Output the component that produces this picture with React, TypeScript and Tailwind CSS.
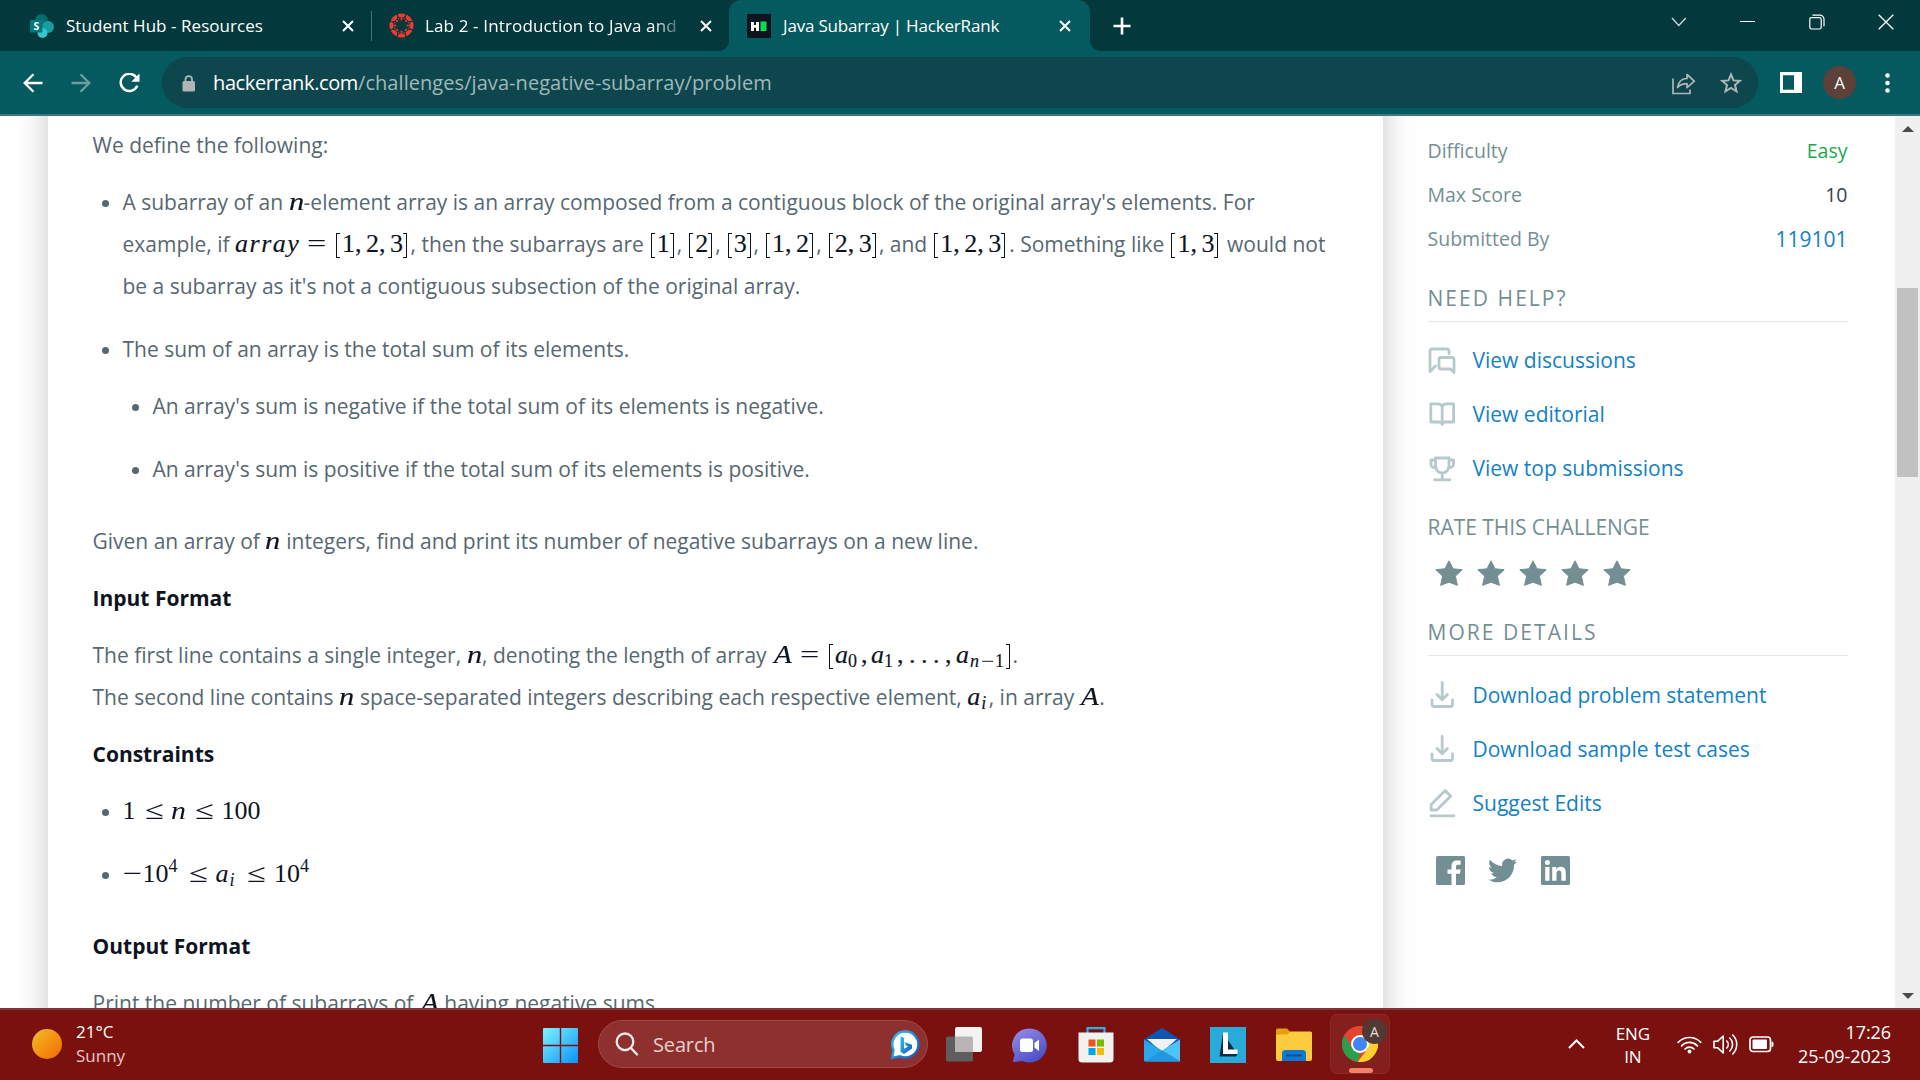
import React from "react";

type Kids = { children?: React.ReactNode };

/* ---------- math helpers ---------- */

function M({ w, bold = true, children }: { w: string; bold?: boolean } & Kids) {
  return (
    <span
      className={
        "inline-block whitespace-nowrap font-['Liberation_Serif',serif] text-[26px] leading-none text-[#0e141e] " +
        (bold ? "[-webkit-text-stroke:0.15px_#0e141e] " : "") +
        w
      }
    >
      {children}
    </span>
  );
}

function C({ w, c = "", children }: { w: string; c?: string } & Kids) {
  return <span className={"inline-block leading-none " + w + " " + c}>{children}</span>;
}

const It = ({ w, children }: { w: string } & Kids) => (
  <C w={w} c="italic">
    {children}
  </C>
);

/* Wide capital A set in the math italic */
const BigA = ({ w }: { w: string }) => (
  <C w={w}>
    <span className="inline-block origin-left scale-x-[1.12] italic leading-none">A</span>
  </C>
);

/* Relation sign stretched to math width */
const Rel = ({ w, children }: { w: string } & Kids) => (
  <C w={w}>
    <span className="inline-block origin-left scale-x-[1.32] leading-none [-webkit-text-stroke:0]">{children}</span>
  </C>
);

const Sub = ({ w, it = false, children }: { w: string; it?: boolean } & Kids) => (
  <span className={"inline-block translate-y-[4px] text-[18px] leading-none " + w + (it ? " italic" : "")}>{children}</span>
);

const Sup = ({ w, children }: { w: string } & Kids) => (
  <span className={"inline-block -translate-y-[10px] text-[18px] leading-none " + w}>{children}</span>
);

const Open = () => (
  <span className="inline-block w-[6px] text-[29px] leading-none">
    <span className="inline-block h-[25px] w-[4px] translate-y-[6px] border-y-[1.5px] border-l-[1.5px] border-[#0e141e]" />
  </span>
);
const Close = () => (
  <span className="inline-block w-[5px] text-[29px] leading-none">
    <span className="inline-block h-[25px] w-[4px] translate-y-[6px] border-y-[1.5px] border-r-[1.5px] border-[#0e141e]" />
  </span>
);

function List({ w, items }: { w: string; items: string[] }) {
  return (
    <M w={w}>
      <span className="inline-block w-[1.6px]" />
      <Open />
      {items.map((x, i) => (
        <React.Fragment key={x}>
          {i > 0 && <C w="w-[11px]">,</C>}
          <C w="w-[13px]">{x}</C>
        </React.Fragment>
      ))}
      <Close />
    </M>
  );
}

const N = ({ w }: { w: string }) => (
  <M w={w}>
    <span className="inline-block origin-left scale-x-[1.17] italic leading-none">n</span>
  </M>
);

function Li({ className = "", children }: { className?: string } & Kids) {
  return (
    <li className={"flex " + className}>
      <span className="mt-[19px] mr-[13.500px] ml-[9.500px] h-[7px] w-[7px] shrink-0 rounded-full bg-[#576871]" />
      <div className="min-w-0 flex-1">{children}</div>
    </li>
  );
}

const Line = ({ children }: Kids) => <div className="h-[42px] leading-[42px] whitespace-pre">{children}</div>;
const H = ({ children }: Kids) => <div className="h-[42px] leading-[42px] font-bold text-[#0e141e]">{children}</div>;

/* ---------- browser chrome ---------- */

const TabClose = ({ className = "" }: { className?: string }) => (
  <svg width="12" height="12" viewBox="0 0 12 12" className={"shrink-0 " + className}>
    <path d="M1 1l10 10M11 1L1 11" stroke="#fff" strokeWidth="2" />
  </svg>
);

function SharePointIcon() {
  return (
    <svg width="24" height="24" viewBox="0 0 24 24" className="shrink-0">
      <circle cx="11.5" cy="6.5" r="6.5" fill="#036c70" />
      <circle cx="18" cy="13" r="6" fill="#1a9ba1" />
      <circle cx="12.5" cy="19" r="5" fill="#37c6d0" />
      <rect x="0" y="6" width="12.5" height="12.5" rx="1" fill="#03787c" />
      <text x="6.3" y="15.8" textAnchor="middle" fontSize="10.5" fontWeight="700" fontFamily="Open Sans, sans-serif" fill="#fff">S</text>
    </svg>
  );
}

function CanvasIcon() {
  const a = [0, 45, 90, 135, 180, 225, 270, 315];
  return (
    <svg width="25" height="25" viewBox="-12.5 -12.5 25 25" className="shrink-0">
      {a.map((d) => (
        <g key={d} transform={`rotate(${d})`} fill="#ef3a2d">
          <path d="M-3.800 -11.400A12 12 0 0 1 3.800 -11.400A3.800 3.600 0 0 1 -3.800 -11.400Z" />
          <circle cx="0" cy="-6.300" r="1.100" />
          <circle cx="2.800" cy="-6.800" r="0.700" />
        </g>
      ))}
    </svg>
  );
}

function HackerRankIcon() {
  return (
    <svg width="24" height="24" viewBox="0 0 24 24" className="shrink-0">
      <rect width="24" height="24" fill="#0e141e" />
      <path d="M4 8h3v3h2V8h3v9H9v-3.200H7V17H4z" fill="#fff" />
      <rect x="13.500" y="7.500" width="6" height="9.500" fill="#05e053" />
    </svg>
  );
}

function TabStrip() {
  return (
    <div className="flex h-[51px] bg-[#03383d] text-[17px] leading-[51px] text-white">
      <div className="flex w-[372px] items-center pl-[30px]">
        <SharePointIcon />
        <span className="ml-[12px] w-[276px] tracking-[0.050px]">Student Hub - Resources</span>
        <TabClose />
        <span className="ml-[17px] h-[30px] w-px bg-[#4b7276]" />
      </div>
      <div className="flex w-[357px] items-center pl-[17px]">
        <CanvasIcon />
        <span className="ml-[11px] w-[254px] overflow-hidden whitespace-nowrap tracking-[0.140px] [mask-image:linear-gradient(90deg,#000_228px,transparent_262px)]">
          Lab 2 - Introduction to Java and
        </span>
        <TabClose className="ml-[21px]" />
      </div>
      <div className="relative flex w-[361px] items-center rounded-t-[12px] bg-[#055a5f] pl-[18px]">
        <span className="absolute bottom-0 -left-[10px] h-[10px] w-[10px] bg-[radial-gradient(circle_at_0_0,#03383d_9.5px,#055a5f_10px)]" />
        <span className="absolute -right-[10px] bottom-0 h-[10px] w-[10px] bg-[radial-gradient(circle_at_100%_0,#03383d_9.5px,#055a5f_10px)]" />
        <HackerRankIcon />
        <span className="ml-[12px] w-[276px] tracking-[-0.180px]">Java Subarray | HackerRank</span>
        <TabClose />
      </div>
      <div className="flex flex-1 items-center">
        <svg width="18" height="18" viewBox="0 0 18 18" className="ml-[23px]">
          <path d="M9 0.5v17M0.5 9h17" stroke="#fff" strokeWidth="2.6" />
        </svg>
        <div className="mb-[8px] ml-auto flex items-center">
          <svg width="16" height="10" viewBox="0 0 16 10" className="mr-[53px]">
            <path d="M1 1l6.8 7.5L14.8 1" fill="none" stroke="#cfdadb" strokeWidth="1.3" />
          </svg>
          <span className="mr-[54px] h-px w-[15px] bg-white" />
          <svg width="16" height="16" viewBox="0 0 16 16" className="mr-[53px]" fill="none" stroke="#fff" strokeWidth="1.2">
            <rect x="0.8" y="3.6" width="11.4" height="11.4" rx="1.8" />
            <path d="M3.4 1.2h7.6a4 4 0 0 1 4 4v7" />
          </svg>
          <svg width="16" height="16" viewBox="0 0 16 16" className="mr-[26px]">
            <path d="M0.7 0.7l14.6 14.6M15.3 0.7L0.7 15.3" stroke="#fff" strokeWidth="1.3" />
          </svg>
        </div>
      </div>
    </div>
  );
}

function Toolbar() {
  return (
    <div className="flex h-[65px] items-center border-b-2 border-[#3c7b80] bg-[#055a5f] pl-[23px]">
      <svg width="20" height="20" viewBox="0 0 20 20" fill="none" stroke="#fff" strokeWidth="2.3">
        <path d="M19.5 10H2M10.5 1.2L1.700 10l8.800 8.800" />
      </svg>
      <svg width="20" height="20" viewBox="0 0 20 20" fill="none" stroke="#6d9fa2" strokeWidth="2.3" className="ml-[28px]">
        <path d="M0.500 10H18M9.500 1.200l8.800 8.800-8.800 8.800" />
      </svg>
      <svg width="21" height="20" viewBox="0 0 21 20" className="ml-[28px]">
        <path d="M17.300 4.400A8.600 8.600 0 1 0 18.300 12.600" fill="none" stroke="#fff" strokeWidth="2.500" />
        <path d="M20.500 0.500v8.200h-8.200z" fill="#fff" />
      </svg>
      <div className="ml-[22px] flex h-[51px] w-[1596px] items-center rounded-full bg-[#0e464e] pl-[20px]">
        <svg width="14" height="17" viewBox="0 0 14 17" className="mt-[2px]">
          <rect x="0.500" y="6" width="12.500" height="10.500" rx="1.500" fill="#b0b5b9" />
          <path d="M3.500 6.500V4.300a3.250 3.250 0 0 1 6.500 0V6.500" fill="none" stroke="#b0b5b9" strokeWidth="1.800" />
        </svg>
        <div className="ml-[17px] text-[20px] leading-[51px] tracking-[0.060px] text-[#9fb9bb]">
          <span className="tracking-[-0.380px] text-white">hackerrank.com</span>/challenges/java-negative-subarray/problem
        </div>
        <svg width="24" height="22" viewBox="0 0 24 22" className="mb-[-2px] ml-auto" fill="none" stroke="#b0b5b9" strokeWidth="1.700">
          <path d="M1 5.500V20.500H18V16.500" />
          <path d="M5.500 14.500C6.500 8.500 10 5.500 15 5.500V1.500L22.300 8.200 15 14.700V10.600C10.500 10.600 7.500 12 5.500 14.500Z" strokeLinejoin="round" />
        </svg>
        <svg width="22" height="21" viewBox="0 0 22 21" className="mr-[16px] ml-[24px]">
          <path d="M11 2.500l2.500 5.900 6.300.5-4.800 4.200 1.500 6.200L11 16l-5.500 3.300L7 13.100 2.200 8.900l6.300-.5z" fill="none" stroke="#b0b5b9" strokeWidth="2" />
        </svg>
      </div>
      <svg width="22" height="21" viewBox="0 0 22 21" className="ml-[22px]">
        <path fillRule="evenodd" d="M0 0h22v21H0zM3 3.200v14.600h11V3.200z" fill="#fff" />
      </svg>
      <span className="ml-[21px] flex h-[33px] w-[33px] items-center justify-center rounded-full bg-[#5d4037] text-[17px] leading-none text-white">A</span>
      <svg width="5" height="20" viewBox="0 0 5 20" className="ml-[28.500px]" fill="#fff">
        <circle cx="2.500" cy="2.500" r="2.300" />
        <circle cx="2.500" cy="10" r="2.300" />
        <circle cx="2.500" cy="17.500" r="2.300" />
      </svg>
    </div>
  );
}

/* ---------- problem statement ---------- */

function Article() {
  return (
    <article className="-mt-[40px] h-[972px] w-[1335px] shrink-0 bg-white pt-[48px] pl-[44.500px] text-[21px] text-[#576871] shadow-[0_0_30px_rgba(0,0,0,0.22)]">
      <Line>We define the following:</Line>
      <ul className="mt-[15px]">
        <Li>
          <Line>A subarray of an <N w="w-[15px]" />-element array is an array composed from a contiguous block of the original array's elements. For</Line>
          <Line>
            example, if <M w="w-[175.500px]">
              <C w="w-[72px]" c="italic tracking-[1.500px]">array</C>
              <Rel w="w-[29px]">=</Rel>
              <Open /><C w="w-[13px]">1</C><C w="w-[11px]">,</C><C w="w-[13px]">2</C><C w="w-[11px]">,</C><C w="w-[13px]">3</C><Close />
            </M>, then the subarrays are <List w="w-[27.500px]" items={["1"]} />, <List w="w-[27.500px]" items={["2"]} />, <List w="w-[27.500px]" items={["3"]} />, <List w="w-[51.800px]" items={["1", "2"]} />, <List w="w-[51.800px]" items={["2", "3"]} />, and <List w="w-[76.500px]" items={["1", "2", "3"]} />. Something like <List w="w-[51.800px]" items={["1", "3"]} /> would not
          </Line>
          <Line>be a subarray as it's not a contiguous subsection of the original array.</Line>
        </Li>
        <Li className="mt-[21px]">
          <Line>The sum of an array is the total sum of its elements.</Line>
          <ul className="mt-[15px]">
            <Li><Line>An array's sum is negative if the total sum of its elements is negative.</Line></Li>
            <Li className="mt-[21px]"><Line>An array's sum is positive if the total sum of its elements is positive.</Line></Li>
          </ul>
        </Li>
      </ul>
      <div className="mt-[30px]">
        <Line>Given an array of <N w="w-[15.500px]" /> integers, find and print its number of negative subarrays on a new line.</Line>
      </div>
      <div className="mt-[15px]"><H>Input Format</H></div>
      <div className="mt-[15px]">
        <Line>
          The first line contains a single integer, <N w="w-[15.500px]" />, denoting the length of array <M w="w-[240.500px]">
            <span className="inline-block w-[1.500px]" />
            <BigA w="w-[26.500px]" />
            <Rel w="w-[29px]">=</Rel>
            <Open /><It w="w-[13px]">a</It><Sub w="w-[13px]">0</Sub><C w="w-[10px]">,</C>
            <It w="w-[13px]">a</It><Sub w="w-[13px]">1</Sub><C w="w-[12px]">,</C>
            <C w="w-[36px]" c="tracking-[5.500px]">...</C><C w="w-[11px]">,</C>
            <It w="w-[14px]">a</It><Sub it w="w-[11px]">n</Sub>
            <Sub w="w-[14px]"><span className="inline-block origin-left scale-x-[1.300]">−</span></Sub><Sub w="w-[11px]">1</Sub><Close />
          </M>.
        </Line>
        <Line>
          The second line contains <N w="w-[15.500px]" /> space-separated integers describing each respective element, <M w="w-[21.500px]">
            <It w="w-[14px]">a</It><Sub it w="w-[6px]">i</Sub>
          </M>, in array <M w="w-[19.500px]"><span className="inline-block w-[1px]" /><BigA w="w-[18px]" /></M>.
        </Line>
      </div>
      <div className="mt-[15px]"><H>Constraints</H></div>
      <ul className="mt-[15px]">
        <Li>
          <Line>
            <M w="w-[200px]" bold={false}>
              <C w="w-[22px]">1</C><Rel w="w-[26px]">≤</Rel>
              <It w="w-[24px]"><span className="inline-block origin-left scale-x-[1.150]">n</span></It><Rel w="w-[27px]">≤</Rel><C w="w-[39px]">100</C>
            </M>
          </Line>
        </Li>
        <Li className="mt-[21px]">
          <Line>
            <M w="w-[220px]" bold={false}>
              <Rel w="w-[20px]">−</Rel><C w="w-[26px]">10</C><Sup w="w-[20px]">4</Sup>
              <Rel w="w-[27px]">≤</Rel>
              <It w="w-[14px]">a</It><Sub it w="w-[17.500px]">i</Sub>
              <Rel w="w-[27px]">≤</Rel><C w="w-[26px]">10</C><Sup w="w-[10px]">4</Sup>
            </M>
          </Line>
        </Li>
      </ul>
      <div className="mt-[30px]"><H>Output Format</H></div>
      <div className="mt-[15px]">
        <Line>Print the number of subarrays of <M w="w-[20px]"><span className="inline-block w-[2.500px]" /><BigA w="w-[17px]" /></M> having negative sums.</Line>
      </div>
    </article>
  );
}

/* ---------- sidebar ---------- */

const iconProps = { width: 30, height: 30, viewBox: "0 0 30 30", fill: "none", stroke: "#b7c9cc", strokeWidth: 2.8, strokeLinejoin: "round" as const, strokeLinecap: "round" as const };

const ChatIcon = () => (
  <svg {...iconProps}>
    <path d="M21 7.500V5a2 2 0 0 0-2-2H4a2 2 0 0 0-2 2v20.500L7.500 20" />
    <path d="M13 11.500H24a2 2 0 0 1 2 2v13L22.500 23H13a2 2 0 0 1-2-2v-7.500a2 2 0 0 1 2-2z" />
  </svg>
);
const BookIcon = () => (
  <svg {...iconProps}>
    <path d="M14.200 6.500C13.200 4.500 12 3.800 10 3.800H2.800V22h8c2 0 2.900.5 3.400 2.500.5-2 1.400-2.500 3.400-2.500h8V3.800h-7.200c-2 0-3.200.7-4.200 2.700zM14.200 6.500V24" />
  </svg>
);
const TrophyIcon = () => (
  <svg {...iconProps}>
    <path d="M7.500 4H21v8a6.750 7 0 0 1-13.500 0zM7.500 6H3v4.500a3 3 0 0 0 3 3h2M21 6h4.500v4.500a3 3 0 0 1-3 3h-2M14.200 19v6.500M6.500 25.800h15.500" />
  </svg>
);
const DownloadIcon = () => (
  <svg {...iconProps}>
    <path d="M14.200 1.500v17M9 13.500l5.200 5.200 5.200-5.200M4 19v4.500a2 2 0 0 0 2 2h16.500a2 2 0 0 0 2-2V19" />
  </svg>
);
const EditIcon = () => (
  <svg {...iconProps}>
    <path d="M3.200 21v-5.500L17.200 1.500l5.500 5.700L8.800 21zM3 26.800h23" />
  </svg>
);

const SideLink = ({ icon, children }: { icon: React.ReactNode } & Kids) => (
  <div className="flex h-[54px] items-center text-[21px] leading-[54px] text-[#1381c5]">
    <span className="w-[45px] pt-[2px]">{icon}</span>
    {children}
  </div>
);

const Row = ({ label, value, cls }: { label: string; value: string; cls: string }) => (
  <div className="flex h-[44px] justify-between text-[19.500px] leading-[44px]">
    <span className="text-[#738f93]">{label}</span>
    <span className={cls}>{value}</span>
  </div>
);

function Sidebar() {
  return (
    <aside className="ml-[44.500px] w-[420px] pt-[12.500px] text-[#738f93]">
      <Row label="Difficulty" value="Easy" cls="text-[#1ba94c]" />
      <Row label="Max Score" value="10" cls="text-[#39424e]" />
      <Row label="Submitted By" value="119101" cls="text-[21px] text-[#1381c5]" />
      <div className="mt-[23.500px] border-b border-[#e2e9eb] pb-[9px] text-[21px] leading-[28px] tracking-[2.050px]">NEED HELP?</div>
      <div className="mt-[10.500px]">
        <SideLink icon={<ChatIcon />}>View discussions</SideLink>
        <SideLink icon={<BookIcon />}>View editorial</SideLink>
        <SideLink icon={<TrophyIcon />}>View top submissions</SideLink>
      </div>
      <div className="mt-[18.500px] text-[21px] leading-[28px] tracking-[-0.050px]">RATE THIS CHALLENGE</div>
      <div className="mt-[19px] flex gap-[14px] pl-[7px]">
        {[1, 2, 3, 4, 5].map((i) => (
          <svg key={i} width="28" height="26" viewBox="0 0 28 26">
            <path d="M14 0.800l4 8 9.200.9-6.800 6.400 2 9.200L14 22.200l-8.400 3.100 2-9.200L0.800 9.700l9.200-.9z" fill="#738f93" stroke="#738f93" strokeLinejoin="round" />
          </svg>
        ))}
      </div>
      <div className="mt-[32px] border-b border-[#e2e9eb] pb-[9px] text-[21px] leading-[28px] tracking-[2.050px]">MORE DETAILS</div>
      <div className="mt-[11.500px]">
        <SideLink icon={<DownloadIcon />}>Download problem statement</SideLink>
        <SideLink icon={<DownloadIcon />}>Download sample test cases</SideLink>
        <SideLink icon={<EditIcon />}>Suggest Edits</SideLink>
      </div>
      <div className="mt-[26px] flex items-center pl-[8px]">
        <svg width="29" height="29" viewBox="0 0 29 29">
          <path fillRule="evenodd" d="M1.500 0h26a1.500 1.500 0 0 1 1.500 1.500v26a1.500 1.500 0 0 1-1.500 1.500H20V17.800h4l.6-4.300H20v-2.700c0-1.300.4-2.100 2.100-2.100h2.500V4.600c-.5 0-1.900-.2-3.500-.2-3.500 0-5.600 2-5.600 5.800v3.300h-4v4.300h4V29H1.500A1.500 1.500 0 0 1 0 27.500v-26A1.500 1.500 0 0 1 1.500 0z" fill="#738f93" />
        </svg>
        <svg width="29" height="29" viewBox="0 0 24 24" className="ml-[23px]">
          <path d="M23.950 4.570a10 10 0 0 1-2.820.77 4.960 4.960 0 0 0 2.160-2.720c-.95.550-2.010.960-3.130 1.180a4.920 4.920 0 0 0-8.380 4.480C7.690 8.090 4.070 6.130 1.640 3.160a4.820 4.820 0 0 0-.67 2.480c0 1.710.87 3.210 2.190 4.100a4.900 4.900 0 0 1-2.230-.620v.060a4.920 4.920 0 0 0 3.950 4.830 5 5 0 0 1-2.210.080 4.940 4.940 0 0 0 4.600 3.420A9.870 9.870 0 0 1 0 19.540a13.990 13.990 0 0 0 7.550 2.210c9.050 0 14-7.500 14-13.980 0-.210 0-.420-.020-.630a9.940 9.940 0 0 0 2.460-2.550z" fill="#738f93" />
        </svg>
        <svg width="29" height="29" viewBox="0 0 29 29" className="ml-[24px]">
          <path fillRule="evenodd" d="M1.500 0h26a1.500 1.500 0 0 1 1.500 1.500v26a1.500 1.500 0 0 1-1.500 1.500h-26A1.500 1.500 0 0 1 0 27.500v-26A1.500 1.500 0 0 1 1.500 0zM4.200 11v13.800h4.300V11zM6.400 4a2.500 2.500 0 1 0 0 5 2.500 2.500 0 0 0 0-5zM11.200 11v13.800h4.300V18c0-1.800.5-3.500 2.600-3.500s2.300 1.900 2.300 3.600v6.700h4.400v-7.600c0-3.700-.9-6.500-5.200-6.500-2.100 0-3.500 1.100-4.100 2.200h-.1V11z" fill="#738f93" />
        </svg>
      </div>
    </aside>
  );
}

function Scrollbar() {
  return (
    <div className="ml-auto flex w-[25px] flex-col items-center bg-[#f0f0f0]">
      <svg width="12" height="6" viewBox="0 0 12 6" className="mt-[10px]"><path d="M6 0l6 6H0z" fill="#4c4c4c" /></svg>
      <div className="mt-[156px] h-[189px] w-[21px] bg-[#c1c1c1]" />
      <svg width="12" height="6" viewBox="0 0 12 6" className="mt-auto mb-[9px]"><path d="M0 0h12L6 6z" fill="#4c4c4c" /></svg>
    </div>
  );
}

/* ---------- taskbar ---------- */

function Taskbar() {
  return (
    <div className="flex h-[72px] items-center border-t-2 border-[#7d3636] bg-[#7b110e] text-white">
      <div className="mb-[3px] ml-[31.500px] h-[30px] w-[30px] rounded-full bg-[linear-gradient(135deg,#f0be32,#f5930f_50%,#f06a0c)]" />
      <div className="mb-[3px] ml-[14.500px] w-[467px] text-[17px] leading-[24px]">
        <div>21°C</div>
        <div className="text-[#e3c7c6]">Sunny</div>
      </div>
      <svg width="35" height="35" viewBox="0 0 35 35">
        <defs>
          <linearGradient id="win" x1="0" y1="0" x2="1" y2="1" gradientUnits="objectBoundingBox">
            <stop offset="0" stopColor="#7df3ff" />
            <stop offset="1" stopColor="#0a93fb" />
          </linearGradient>
        </defs>
        <path d="M1 0H16.800V16.800H0V1a1 1 0 0 1 1-1zM18.200 0H34a1 1 0 0 1 1 1V16.800H18.200zM0 18.200H16.800V35H1a1 1 0 0 1-1-1zM18.200 18.200H35V34a1 1 0 0 1-1 1H18.200z" fill="url(#win)" />
      </svg>
      <div className="mb-[2px] ml-[20px] flex h-[48px] w-[330px] items-center rounded-full border border-[#9c4b49] bg-[#8d302e] pl-[16px]">
        <svg width="24" height="24" viewBox="0 0 24 24" fill="none" stroke="#f3e9e9" strokeWidth="2.300">
          <circle cx="10" cy="9.800" r="8.300" />
          <path d="M16 16l6 6.500" strokeLinecap="round" />
        </svg>
        <span className="mt-[2px] ml-[14px] text-[20px] tracking-[-0.150px] text-[#e6d0cf]">Search</span>
        <svg width="30" height="30" viewBox="0 0 30 30" className="mt-[1px] mr-[7px] ml-auto">
          <defs>
            <linearGradient id="bing" x1="0" y1="0" x2="1" y2="1">
              <stop offset="0" stopColor="#29c3f7" />
              <stop offset="1" stopColor="#1755c0" />
            </linearGradient>
          </defs>
          <path d="M15.500 1.500a13 13 0 1 1-5.500 24.800L2 28l1.500-8A13 13 0 0 1 15.500 1.500z" fill="#fff" stroke="url(#bing)" strokeWidth="2.400" />
          <path d="M10.500 6.500l3.500 1.300v11l4-2.300-2-1-1.500-3.500 7.500 2.800v3.800L14 24l-3.500-2.200z" fill="url(#bing)" />
        </svg>
      </div>
      <svg width="36" height="35" viewBox="0 0 36 35" className="mb-[1px] ml-[18px]">
        <rect x="0" y="9.500" width="27" height="25" rx="2" fill="#5e5e5e" />
        <rect x="9" y="0" width="27" height="25" rx="2" fill="#f3f3f3" />
        <path d="M9 9.500h16a2 2 0 0 1 2 2V25H11a2 2 0 0 1-2-2z" fill="#b9b5b5" />
      </svg>
      <svg width="35" height="35" viewBox="0 0 35 35" className="ml-[30px]">
        <defs>
          <linearGradient id="chat" x1="0" y1="0" x2="0.600" y2="1">
            <stop offset="0" stopColor="#9a8fe6" />
            <stop offset="1" stopColor="#4d50c8" />
          </linearGradient>
        </defs>
        <path d="M17.500 0.500a17 17 0 1 1-7 32.400L0.800 34.300l1.800-8A17 17 0 0 1 17.500 0.500z" fill="url(#chat)" />
        <rect x="8" y="10.500" width="13" height="13.500" rx="2.500" fill="#fff" />
        <path d="M22.500 15l4.500-3.500v11.500l-4.500-3.500z" fill="#fff" />
      </svg>
      <svg width="36" height="36" viewBox="0 0 36 36" className="ml-[31px]">
        <path d="M9.500 6V1.200H26.500V6" fill="none" stroke="#2cb0ec" strokeWidth="2.200" />
        <path d="M0.500 5.500H35.500V32a3.500 3.500 0 0 1-3.500 3.500H4A3.500 3.500 0 0 1 0.500 32z" fill="#f1f1f1" />
        <rect x="10.500" y="12.500" width="7" height="7" fill="#f25022" />
        <rect x="19" y="12.500" width="7" height="7" fill="#7fba00" />
        <rect x="10.500" y="21" width="7" height="7" fill="#00a4ef" />
        <rect x="19" y="21" width="7" height="7" fill="#ffb900" />
      </svg>
      <svg width="36" height="34" viewBox="0 0 36 34" className="mb-[1px] ml-[30px]">
        <path d="M0 11.500L16.500 0.800a2.500 2.500 0 0 1 3 0L36 11.500V20H0z" fill="#0a56b0" />
        <path d="M3 11h30L18 24z" fill="#f2f2f2" />
        <path d="M0 11.500L18 22.500 36 33.500H1.500A1.500 1.500 0 0 1 0 32z" fill="#2ba6ea" />
        <path d="M18 22.500L36 11.500V33.500z" fill="#4cc4f8" />
        <path d="M18 22.500L36 33.500H1z" fill="#2197e3" />
      </svg>
      <svg width="36" height="36" viewBox="0 0 36 36" className="mb-[1px] ml-[30px]">
        <rect width="36" height="36" fill="#29abd9" />
        <path d="M13 6L9.500 29.500H26L27.500 27z" fill="#0b2a47" />
        <path d="M13 5.500h5V22.500h9.500V27H13z" fill="#fff" />
      </svg>
      <svg width="36" height="34" viewBox="0 0 36 34" className="ml-[30px]">
        <path d="M0 2a1.500 1.500 0 0 1 1.500-1.500H11L14.500 4H18V12H0z" fill="#e2a00f" />
        <path d="M0 6.500H11L14.500 3.500H34.500A1.500 1.500 0 0 1 36 5V31a2 2 0 0 1-2 2H2a2 2 0 0 1-2-2z" fill="#fccb3e" />
        <path d="M6 33V25.500a3.500 3.500 0 0 1 3.500-3.500h17a3.500 3.500 0 0 1 3.500 3.500V33z" fill="#0f78d0" />
        <path d="M11 27.500h14" stroke="#0a4c97" strokeWidth="1.800" strokeLinecap="round" />
      </svg>
      <div className="relative mb-[2px] ml-[18px] flex h-[60px] w-[60px] justify-center rounded-[7px] border border-[#8a2b28] bg-[#83201d] pt-[11px]">
        <svg width="36" height="36" viewBox="0 0 36 36">
          <circle cx="18" cy="18" r="18" fill="#e8432f" />
          <path d="M2.400 9L10.200 22.500 18 27l-2.300 8.900A18 18 0 0 1 2.400 9z" fill="#2a9e4a" />
          <path d="M18 9H33.600A18 18 0 0 1 15.700 35.900L25.800 22.500z" fill="#fdd129" />
          <circle cx="18" cy="18" r="9" fill="#fff" />
          <circle cx="18" cy="18" r="7" fill="#4285f4" />
        </svg>
        <span className="absolute top-[4px] left-[31px] flex h-[25px] w-[25px] items-center justify-center rounded-full bg-[#513a34] text-[14px] leading-none text-[#e3dedd]">A</span>
        <span className="absolute bottom-0 left-[18px] h-[5px] w-[24px] rounded-full bg-[#f38068]" />
      </div>
      <div className="mb-[2px] ml-auto flex items-center pr-[29px]">
        <svg width="17" height="10" viewBox="0 0 17 10" fill="none" stroke="#fff" strokeWidth="2">
          <path d="M1 9l7.500-7.500L16 9" />
        </svg>
        <div className="mt-[1px] ml-[31px] text-center text-[17px] leading-[23px] tracking-[-0.100px]">
          <div>ENG</div>
          <div>IN</div>
        </div>
        <svg width="25" height="19" viewBox="0 0 25 19" className="ml-[27px]" fill="none" stroke="#fff" strokeWidth="1.700" strokeLinecap="round">
          <path d="M1.200 7.400a15.500 15.500 0 0 1 22.600 0M4.600 10.800a11 11 0 0 1 15.800 0M8 14a6.500 6.500 0 0 1 9 0" />
          <circle cx="12.500" cy="16.500" r="1.900" fill="#fff" stroke="none" />
        </svg>
        <svg width="25" height="21" viewBox="0 0 25 21" className="ml-[11px]" fill="none" stroke="#fff" strokeWidth="1.600" strokeLinecap="round" strokeLinejoin="round">
          <path d="M1 7.200h3.800L10.200 2v17l-5.400-5.200H1zM13.800 7a5 5 0 0 1 0 7M16.800 4a9 9 0 0 1 0 13M19.800 1a13.500 13.500 0 0 1 0 19" />
        </svg>
        <svg width="26" height="17" viewBox="0 0 26 17" className="ml-[11px]">
          <rect x="1" y="1" width="20.500" height="14.500" rx="3" fill="none" stroke="#fff" strokeWidth="1.700" />
          <rect x="3.500" y="3.500" width="14.500" height="9.500" rx="0.800" fill="#fff" />
          <path d="M22.500 5.500c2 0 2 1.500 2 2.800s0 2.800-2 2.800z" fill="#fff" />
        </svg>
        <div className="w-[116px] text-right text-[18px] leading-[24px] tracking-[-0.100px]">
          <div>17:26</div>
          <div>25-09-2023</div>
        </div>
      </div>
    </div>
  );
}

export default function App() {
  return (
    <div className="flex h-[1080px] w-[1920px] flex-col overflow-hidden bg-white font-['Open_Sans',sans-serif]">
      <TabStrip />
      <Toolbar />
      <main className="flex h-[892px] shrink-0 overflow-hidden pl-[48px]">
        <Article />
        <Sidebar />
        <Scrollbar />
      </main>
      <Taskbar />
    </div>
  );
}
